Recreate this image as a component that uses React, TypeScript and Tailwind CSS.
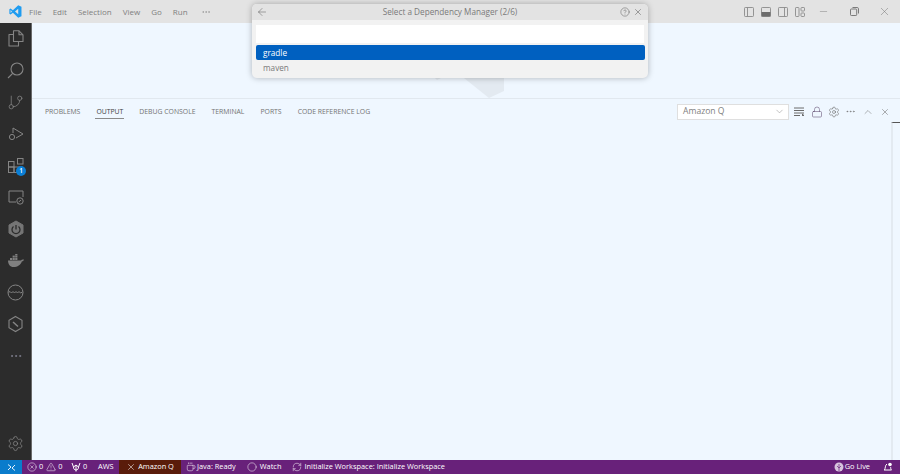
import React from "react";
import { ArrowLeft, X, ChevronDown, ChevronUp, Lock, Settings, Ellipsis, CircleHelp, GitBranch, Minus, Coffee, RefreshCw, CircleX, TriangleAlert, Circle } from "lucide-react";

const font = "font-['Open_Sans','Noto_Sans',sans-serif]";

function VSLogo() {
  return (
    <svg width="13" height="13" viewBox="0 0 100 100">
      <path d="M71 2 L96 13 V87 L71 98 L30 59 L12 73 L3 68 V32 L12 27 L30 41 Z M71 29 L46 50 L71 71 Z M12 38 V62 L23 50 Z" fill="#1f9cf0" fillRule="evenodd" />
    </svg>
  );
}

function Activity({ children }: { children: React.ReactNode }) {
  return <div className="h-[31.7px] w-full flex items-center justify-center relative text-[#858585]">{children}</div>;
}

function PanelGlyph({ kind }: { kind: "left" | "bottom" | "right" | "custom" }) {
  if (kind === "custom")
    return (
      <svg width="10" height="10" viewBox="0 0 10 10" fill="none" stroke="#8b8b8b" strokeWidth="0.9">
        <rect x="0.5" y="0.5" width="3.5" height="9" rx="0.7" />
        <rect x="6" y="0.5" width="3.5" height="3.5" rx="0.7" />
        <rect x="6" y="6" width="3.5" height="3.5" rx="0.7" />
      </svg>
    );
  return (
    <svg width="10" height="10" viewBox="0 0 10 10" fill="none" stroke="#8b8b8b" strokeWidth="0.9">
      <rect x="0.5" y="0.5" width="9" height="9" rx="0.8" />
      {kind === "left" && <line x1="3.5" y1="0.5" x2="3.5" y2="9.5" />}
      {kind === "right" && <line x1="6.5" y1="0.5" x2="6.5" y2="9.5" />}
      {kind === "bottom" && <rect x="0.5" y="5" width="9" height="4.5" fill="#6c6c6c" stroke="none" />}
    </svg>
  );
}

function IconCell({ children }: { children: React.ReactNode }) {
  return <div className="w-[17px] flex items-center justify-center">{children}</div>;
}

function WinCell({ children }: { children: React.ReactNode }) {
  return <div className="w-[30.5px] flex items-center justify-center">{children}</div>;
}

export default function App() {
  const menus = ["File", "Edit", "Selection", "View", "Go", "Run"];
  const tabs = ["PROBLEMS", "OUTPUT", "DEBUG CONSOLE", "TERMINAL", "PORTS", "CODE REFERENCE LOG"];
  return (
    <div className={`${font} relative w-[900px] h-[474px] flex flex-col overflow-hidden bg-[#eff7ff]`}>
      {/* title bar */}
      <div className="h-[23px] shrink-0 bg-[#e3e3e3] flex items-center text-[#808080] text-[8px]">
        <div className="w-[29px] flex justify-center pl-[2px]"><VSLogo /></div>
        <div className="flex gap-[11px] items-center">
          {menus.map((m) => <span key={m}>{m}</span>)}
          <Ellipsis size={10} strokeWidth={1.2} className="ml-[2px]" />
        </div>
        <div className="ml-auto flex items-center">
          <IconCell><PanelGlyph kind="left" /></IconCell>
          <IconCell><PanelGlyph kind="bottom" /></IconCell>
          <IconCell><PanelGlyph kind="right" /></IconCell>
          <IconCell><PanelGlyph kind="custom" /></IconCell>
          <div className="flex items-center text-[#6f6f6f]">
            <WinCell><Minus size={11} strokeWidth={0.9} /></WinCell>
            <WinCell>
              <svg width="9" height="9" viewBox="0 0 9 9" fill="none" stroke="currentColor" strokeWidth="0.9">
                <rect x="0.5" y="2" width="6.2" height="6.5" rx="0.8" />
                <path d="M2.5 0.5 H7.2 C8 0.5 8.5 1 8.5 1.8 V6.5" />
              </svg>
            </WinCell>
            <WinCell><X size={13} strokeWidth={0.9} /></WinCell>
          </div>
        </div>
      </div>

      <div className="flex-1 flex min-h-0">
        {/* activity bar */}
        <div className="w-[32px] shrink-0 bg-[#2c2c2c] border-r border-[#6a6a6a] flex flex-col">
          <Activity>
            <svg width="16" height="17" viewBox="0 0 16 17" fill="none" stroke="currentColor" strokeWidth="1.1" strokeLinejoin="round">
              <path d="M5.5 0.8 H11 L15 4.8 V11.5 H5.5 Z" />
              <path d="M5.5 4.5 H1 V16 H10.5 V11.5" />
              <path d="M11 0.8 V4.8 H15" />
            </svg>
          </Activity>
          <Activity>
            <svg width="17" height="17" viewBox="0 0 17 17" fill="none" stroke="currentColor" strokeWidth="1.1">
              <circle cx="10" cy="7" r="6" />
              <path d="M5.7 11.3 L1 16" />
            </svg>
          </Activity>
          <Activity><GitBranch size={17} strokeWidth={1.1} /></Activity>
          <Activity>
            <svg width="18" height="18" viewBox="0 0 18 18" fill="none" stroke="currentColor" strokeWidth="1">
              <path d="M6 3 L16 9 L9 13" />
              <path d="M6 3 V8" />
              <circle cx="5" cy="12" r="2.6" />
            </svg>
          </Activity>
          <Activity>
            <svg width="18" height="18" viewBox="0 0 18 18" fill="none" stroke="currentColor" strokeWidth="1">
              <rect x="1.5" y="4.5" width="5.5" height="5.5" />
              <rect x="1.5" y="10" width="5.5" height="5.5" />
              <rect x="7" y="10" width="5.5" height="5.5" />
              <rect x="10.5" y="1.5" width="5.5" height="5.5" />
            </svg>
            <span className="absolute left-[16px] top-[16px] w-[10px] h-[10px] rounded-full bg-[#0a7fd6] text-white text-[6.5px] font-semibold flex items-center justify-center">1</span>
          </Activity>
          <Activity>
            <svg width="18" height="18" viewBox="0 0 18 18" fill="none" stroke="currentColor" strokeWidth="1">
              <path d="M9 14 H2 V3 H16 V9" />
              <circle cx="13" cy="13" r="3.2" fill="#2c2c2c" />
              <path d="M11.6 14 L14.2 12" />
            </svg>
          </Activity>
          <Activity>
            <svg width="18" height="18" viewBox="0 0 18 18">
              <path d="M9 1 L16 5 V13 L9 17 L2 13 V5 Z" fill="#757575" stroke="#757575" strokeLinejoin="round" />
              <path d="M6.5 6.5 A4 4 0 1 0 11.5 6.5" fill="none" stroke="#2c2c2c" strokeWidth="1.3" />
              <line x1="9" y1="5" x2="9" y2="9.5" stroke="#2c2c2c" strokeWidth="1.3" />
            </svg>
          </Activity>
          <Activity>
            <svg width="18" height="14" viewBox="0 0 18 14" fill="#808080">
              <path d="M1 6.5 H14 C14.5 5.5 15.5 5.2 17 5.5 C16.7 6.8 15.8 7.5 14.8 7.5 C13.8 11 10.5 13 6.5 13 C3 13 1.2 10.5 1 6.5 Z" />
              <rect x="3" y="4" width="2.2" height="2" /><rect x="5.6" y="4" width="2.2" height="2" /><rect x="8.2" y="4" width="2.2" height="2" />
              <rect x="5.6" y="1.6" width="2.2" height="2" /><rect x="8.2" y="1.6" width="2.2" height="2" /><rect x="8.2" y="0" width="2.2" height="1.4" />
            </svg>
          </Activity>
          <Activity>
            <svg width="17" height="17" viewBox="0 0 17 17" fill="none" stroke="currentColor" strokeWidth="1">
              <circle cx="8.5" cy="8.5" r="7.5" />
              <path d="M1.5 8.5 L3 7.5 L4.5 9 L6 7.5 L7.5 9 L9 7.5 L10.5 9 L12 7.5 L13.5 9 L15.5 8" />
            </svg>
          </Activity>
          <Activity>
            <svg width="17" height="18" viewBox="0 0 17 18" fill="none" stroke="currentColor" strokeWidth="1.1">
              <path d="M8.5 1.5 L15 5.2 V12.8 L8.5 16.5 L2 12.8 V5.2 Z" />
              <path d="M6 7 L11 11.5" strokeWidth="1.5" />
            </svg>
          </Activity>
          <Activity><Ellipsis size={14} strokeWidth={1.6} className="text-[#7d7d8c]" /></Activity>
          <div className="mt-auto h-[33px] pb-[1px] flex items-center justify-center text-[#858585]">
            <Settings size={17} strokeWidth={1.1} />
          </div>
        </div>

        {/* main */}
        <div className="flex-1 flex flex-col min-w-0">
          <div className="h-[75px] shrink-0 bg-[#eff7ff] relative">
            <svg className="absolute left-[400px] top-[50px]" width="80" height="25" viewBox="0 0 80 25">
              <path d="M32 5 H72 V18 L57 25 Z" fill="#e3eaf1" />
              <path d="M3 5 H9 L5 7 Z" fill="#e3eaf1" />
            </svg>
          </div>
          <div className="flex-1 border-t border-[#e1e8ef] relative">
            <div className="h-[25px] flex items-center pl-[13px] pr-[7px] text-[6.85px] text-[#737373]">
              <div className="flex gap-[16px] pt-[1px]">
                {tabs.map((t) => (
                  <span key={t} className={t === "OUTPUT" ? "relative text-[#424242]" : ""}>
                    {t}
                    {t === "OUTPUT" && <span className="absolute left-[-1px] right-[-1px] top-[11px] h-px bg-[#8a8a8a]" />}
                  </span>
                ))}
              </div>
              <div className="ml-auto flex items-center text-[#6a6a6a]">
                <div className="w-[112px] h-[16px] bg-white border border-[#dfdfdf] flex items-center pl-[5px] pr-[1px] text-[8.6px] text-[#808080] mr-[2px]">
                  Amazon Q
                  <ChevronDown size={11} strokeWidth={1} className="ml-auto mr-[2px]" />
                </div>
                <IconCell>
                  <svg width="11" height="9" viewBox="0 0 11 9" stroke="currentColor" strokeWidth="1" fill="none">
                    <path d="M0 1 H10 M0 3.5 H10 M0 6 H10 M0 8.5 H6" />
                    <path d="M8 7 L10 8.5 L8 9" fill="currentColor" />
                  </svg>
                </IconCell>
                <IconCell><Lock size={12} strokeWidth={1.1} className="text-[#5e4a6e]" /></IconCell>
                <IconCell><Settings size={12} strokeWidth={1.2} /></IconCell>
                <IconCell><Ellipsis size={11} strokeWidth={1.2} /></IconCell>
                <IconCell><ChevronUp size={12} strokeWidth={1} /></IconCell>
                <IconCell><X size={10} strokeWidth={1.3} /></IconCell>
              </div>
            </div>
            <div className="absolute right-0 top-[23px] w-[9px] h-[338px] border-l-2 border-t border-l-[#e3eaf1] border-t-[#555555]" />
          </div>
        </div>
      </div>

      {/* status bar */}
      <div className="h-[14px] shrink-0 bg-[#68217a] flex items-center text-white text-[7.4px]">
        <div className="w-[22px] h-full bg-[#0a7ccc] flex items-center justify-center">
          <svg width="9" height="9" viewBox="0 0 9 9" fill="none" stroke="white" strokeWidth="0.9"><path d="M1 7 L4 4 L1 1.5 M8 2 L5 5 L8 7.5" /></svg>
        </div>
        <div className="flex items-center gap-[2px] pl-[5px] w-[44px]">
          <CircleX size={10} strokeWidth={1.2} /><span>0</span><TriangleAlert size={10} strokeWidth={1.2} className="ml-[1px]" /><span>0</span>
        </div>
        <div className="flex items-center gap-[2px] pl-[5px] w-[27px]">
          <svg width="10" height="10" viewBox="0 0 10 10" fill="none" stroke="white" strokeWidth="1">
            <path d="M1 1 L2.5 5 L5 3 L7.5 5 L9 1 M2.5 5 C2.5 7 3.5 8 5 8 C6.5 8 7.5 7 7.5 5 M5 3 V9.5" />
          </svg>
          <span>0</span>
        </div>
        <span className="pl-[5px] w-[26px]">AWS</span>
        <div className="h-full w-[62px] bg-[#5a1c0a] flex items-center justify-center gap-[2px]"><X size={10} strokeWidth={1.3} /><span>Amazon Q</span></div>
        <div className="flex items-center gap-[1px] px-[5px]"><Coffee size={10} strokeWidth={1.2} /><span>Java: Ready</span></div>
        <div className="flex items-center gap-[3px] pl-[6px] pr-[5px]"><Circle size={10} strokeWidth={1.2} /><span>Watch</span></div>
        <div className="flex items-center gap-[2px] pl-[6px] pr-[5px]"><RefreshCw size={10} strokeWidth={1.2} /><span>Initialize Workspace: Initialize Workspace</span></div>
        <div className="ml-auto flex items-center gap-[1px] px-[5px]">
          <svg width="10" height="10" viewBox="0 0 10 10"><circle cx="5" cy="5" r="4.5" fill="#d8c4dd" /><path d="M5 2 V9 M3 4 L5 6 L7 4" fill="none" stroke="#68217a" strokeWidth="0.7" /></svg>
          <span>Go Live</span>
        </div>
        <div className="w-[25px] flex justify-center">
          <svg width="10" height="10" viewBox="0 0 10 10" fill="none" stroke="white" strokeWidth="1">
            <path d="M1.5 8 C2.5 6.5 2 3 4 2 M1 8 H8.5 C7.5 7 7.8 6 7.6 5" />
            <circle cx="7" cy="2.5" r="1.8" fill="white" stroke="none" />
          </svg>
        </div>
      </div>

      {/* quick pick */}
      <div className="absolute left-[252px] top-[4px] w-[396px] h-[74px] bg-[#f2f2f2] rounded-[5px] shadow-[0_0_6px_rgba(0,0,0,0.28)] overflow-hidden text-[8.2px]">
        <div className="h-[16px] bg-[#e3e3e3] flex items-center justify-center relative text-[#7a7a7a]">
          <ArrowLeft size={12} strokeWidth={1} className="absolute left-[4px] text-[#555555]" />
          <span>Select a Dependency Manager (2/6)</span>
          <CircleHelp size={10} strokeWidth={1.1} className="absolute right-[18px] text-[#4f4f4f]" />
          <X size={10} strokeWidth={1.2} className="absolute right-[5px] text-[#4f4f4f]" />
        </div>
        <div className="mx-[4px] mt-[5px] h-[18px] bg-white" />
        <div className="mx-[3.5px] mt-[2px] h-[15px] rounded-[2px] bg-[#0060c0] text-white flex items-center pl-[7.5px] pt-[1px]">gradle</div>
        <div className="mx-[3.5px] h-[15px] text-[#7a7a7a] flex items-center pl-[7.5px] pt-[1px]">maven</div>
      </div>
    </div>
  );
}
